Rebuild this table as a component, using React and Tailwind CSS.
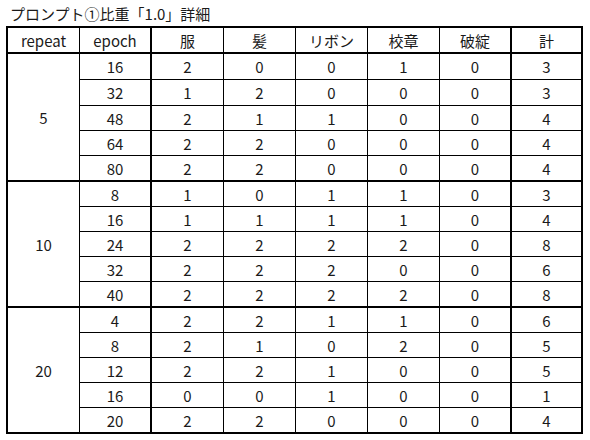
import React from "react";

const groups = [
  {
    repeat: "5",
    rows: [
      ["16", 2, 0, 0, 1, 0, 3],
      ["32", 1, 2, 0, 0, 0, 3],
      ["48", 2, 1, 1, 0, 0, 4],
      ["64", 2, 2, 0, 0, 0, 4],
      ["80", 2, 2, 0, 0, 0, 4],
    ],
  },
  {
    repeat: "10",
    rows: [
      ["8", 1, 0, 1, 1, 0, 3],
      ["16", 1, 1, 1, 1, 0, 4],
      ["24", 2, 2, 2, 2, 0, 8],
      ["32", 2, 2, 2, 0, 0, 6],
      ["40", 2, 2, 2, 2, 0, 8],
    ],
  },
  {
    repeat: "20",
    rows: [
      ["4", 2, 2, 1, 1, 0, 6],
      ["8", 2, 1, 0, 2, 0, 5],
      ["12", 2, 2, 1, 0, 0, 5],
      ["16", 0, 0, 1, 0, 0, 1],
      ["20", 2, 2, 0, 0, 0, 4],
    ],
  },
];

const headers = ["repeat", "epoch", "服", "髪", "リボン", "校章", "破綻", "計"];
// right border thickness per column
const thick = [false, true, false, false, false, false, true, true];

export default function App() {
  return (
    <div
      className="w-[590px] h-[440px] bg-white text-[#1a1a1a] overflow-hidden"
      style={{ fontFamily: '"Noto Sans CJK JP", "Noto Sans", sans-serif' }}
    >
      <div className="h-[26px] flex items-center pl-[10px] text-[15px] leading-none">
        プロンプト①比重「1.0」詳細
      </div>
      <table className="ml-[6px] w-[577px] table-fixed border-separate border-spacing-0 border-l-2 border-t-2 border-black text-[15px] leading-none">
        <colgroup>
          <col className="w-[72px]" />
          <col className="w-[72px]" />
          <col className="w-[72px]" />
          <col className="w-[72px]" />
          <col className="w-[72px]" />
          <col className="w-[72px]" />
          <col className="w-[72px]" />
          <col className="w-[71px]" />
        </colgroup>
        <thead>
          <tr className="h-[26px]">
            {headers.map((h, i) => (
              <th
                key={h}
                className={
                  "p-0 font-normal text-center align-middle border-b-2 border-black " +
                  (thick[i] ? "border-r-2" : "border-r")
                }
              >
                {h}
              </th>
            ))}
          </tr>
        </thead>
        <tbody>
          {groups.map((g, gi) =>
            g.rows.map((r, ri) => {
              const last = ri === 4;
              const tall = last || (gi === 0 && ri < 2);
              return (
                <tr key={gi + "-" + ri} className={tall ? "h-[26px]" : "h-[25px]"}>
                  {ri === 0 && (
                    <td
                      rowSpan={5}
                      className="p-0 text-center align-middle border-r border-b-2 border-black"
                    >
                      {g.repeat}
                    </td>
                  )}
                  {r.map((v, ci) => (
                    <td
                      key={ci}
                      className={
                        "p-0 text-center align-middle border-black " +
                        (thick[ci + 1] ? "border-r-2 " : "border-r ") +
                        (last ? "border-b-2" : "border-b")
                      }
                    >
                      {v}
                    </td>
                  ))}
                </tr>
              );
            })
          )}
        </tbody>
      </table>
    </div>
  );
}
